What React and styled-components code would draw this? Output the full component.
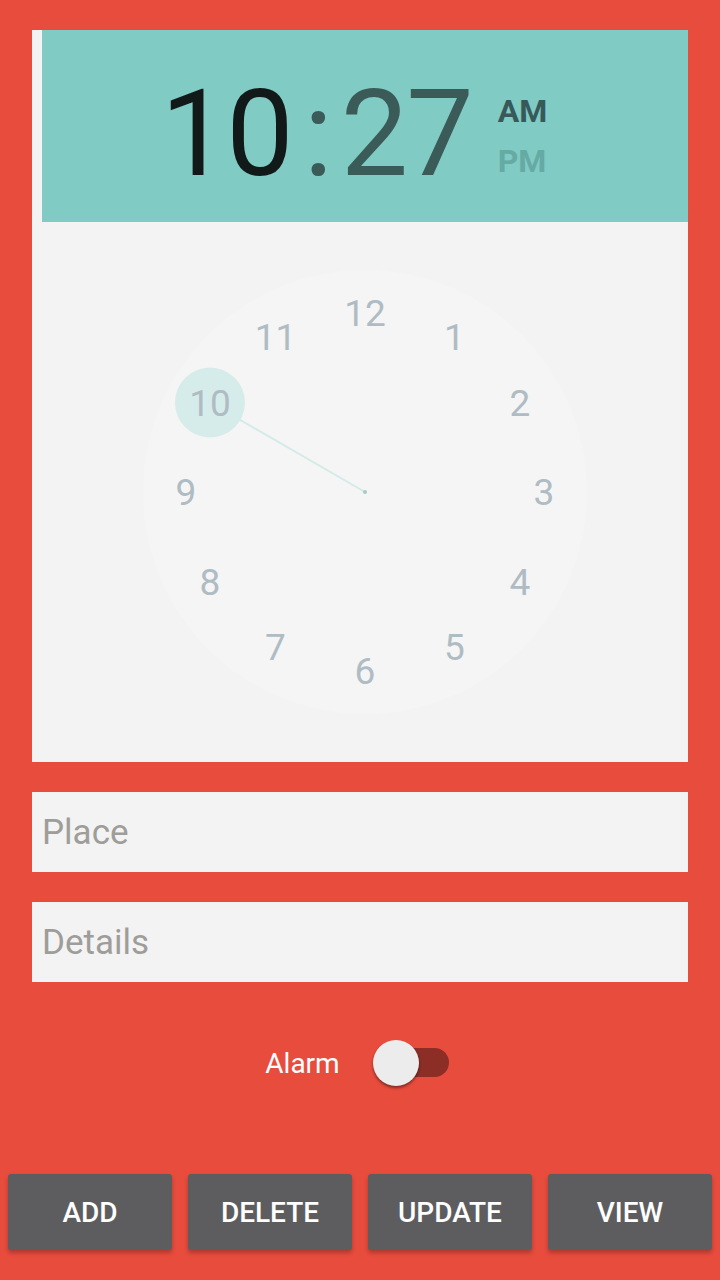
import React from 'react';
import styled, { createGlobalStyle } from 'styled-components';

const GlobalStyle = createGlobalStyle`
  body {
    margin: 0;
    background: #e84c3d;
    font-family: Roboto, "Liberation Sans", sans-serif;
  }
`;

const Page = styled.div`
  width: 720px;
  height: 1280px;
  display: flex;
  flex-direction: column;
  background: #e84c3d;
`;
const Card = styled.div`
  margin: 30px 32px 0;
  height: 732px;
  background: #f3f3f3;
  display: flex;
  flex-direction: column;
`;
const Header = styled.div`
  margin-left: 10px;
  height: 192px;
  box-sizing: border-box;
  padding: 16px 22px 0 0;
  background: #80cbc4;
  display: flex;
  align-items: center;
  justify-content: center;
`;
const Digits = styled.span`
  font-size: 120px;
  line-height: 1;
  letter-spacing: -2px;
  color: ${(p) => (p.active ? '#121a19' : '#3b5b59')};
`;
const Colon = styled.span`
  font-size: 120px;
  line-height: 1;
  color: #3b5b59;
  margin: 0 8px 0 12px;
`;
const Meridiem = styled.div`
  display: flex;
  flex-direction: column;
  gap: 18px;
  margin-left: 26px;
  margin-top: 4px;
`;
const MeridiemLabel = styled.span`
  font-size: 32px;
  font-weight: 700;
  line-height: 32px;
  color: ${(p) => (p.active ? '#37595a' : '#66aaa4')};
`;
const DialArea = styled.div`
  flex: 1;
  margin-left: 10px;
  display: flex;
  align-items: center;
  justify-content: center;
`;
const Dial = styled.div`
  position: relative;
  width: 444px;
  height: 444px;
  border-radius: 50%;
  background: #f5f5f5;
`;
const HandLayer = styled.svg`
  position: absolute;
  inset: 0;
`;
const Numeral = styled.span`
  position: absolute;
  transform: translate(-50%, -50%);
  font-size: 37px;
  line-height: 1;
  color: #afbcc3;
`;
const Field = styled.div`
  margin: 30px 32px 0;
  height: 80px;
  background: #f3f3f3;
  display: flex;
  align-items: center;
  padding-left: 10px;
  font-size: 35px;
  color: #9e9d99;
`;
const AlarmRow = styled.div`
  margin-top: 57px;
  height: 48px;
  display: flex;
  align-items: center;
  justify-content: center;
  gap: 33px;
  padding-right: 6px;
`;
const AlarmLabel = styled.span`
  font-size: 28px;
  color: #ffffff;
`;
const Switch = styled.div`
  position: relative;
  width: 76px;
  height: 46px;
`;
const SwitchTrack = styled.div`
  position: absolute;
  right: 0;
  top: 8px;
  width: 60px;
  height: 29px;
  border-radius: 15px;
  background: #8c2e25;
`;
const SwitchThumb = styled.div`
  position: absolute;
  left: 0;
  top: 0;
  width: 46px;
  height: 46px;
  border-radius: 50%;
  background: #ececec;
  box-shadow: 0 2px 3px rgba(0, 0, 0, 0.45);
`;
const ButtonRow = styled.div`
  margin-top: auto;
  margin-bottom: 30px;
  padding: 0 8px;
  display: grid;
  grid-template-columns: repeat(4, 1fr);
  gap: 16px;
`;
const Button = styled.button`
  height: 76px;
  border: none;
  border-radius: 3px;
  background: #5d5d5f;
  color: #ffffff;
  font-family: Roboto, "Liberation Sans", sans-serif;
  font-size: 28px;
  font-weight: 500;
  box-shadow: 0 3px 4px rgba(0, 0, 0, 0.25);
`;

const RADIUS = 179;
const CENTER = 222;
const hours = [12, 1, 2, 3, 4, 5, 6, 7, 8, 9, 10, 11];

const pos = (i) => {
  const a = (i * Math.PI) / 6;
  return { x: CENTER + RADIUS * Math.sin(a), y: CENTER - RADIUS * Math.cos(a) };
};

const App = () => {
  const sel = pos(10);
  return (
    <>
      <GlobalStyle />
      <Page>
        <Card>
          <Header>
            <Digits active>10</Digits>
            <Colon>:</Colon>
            <Digits>27</Digits>
            <Meridiem>
              <MeridiemLabel active>AM</MeridiemLabel>
              <MeridiemLabel>PM</MeridiemLabel>
            </Meridiem>
          </Header>
          <DialArea>
            <Dial>
              <HandLayer width="444" height="444" viewBox="0 0 444 444">
                <line x1={CENTER} y1={CENTER} x2={sel.x} y2={sel.y} stroke="#d3ebe8" strokeWidth="2" />
                <circle cx={sel.x} cy={sel.y} r="35" fill="#d6ecea" />
                <circle cx={CENTER} cy={CENTER} r="2" fill="#a9c9c5" />
              </HandLayer>
              {hours.map((h, i) => {
                const p = pos(i);
                return (
                  <Numeral key={h} style={{ left: p.x, top: p.y }}>
                    {h}
                  </Numeral>
                );
              })}
            </Dial>
          </DialArea>
        </Card>
        <Field>Place</Field>
        <Field>Details</Field>
        <AlarmRow>
          <AlarmLabel>Alarm</AlarmLabel>
          <Switch>
            <SwitchTrack />
            <SwitchThumb />
          </Switch>
        </AlarmRow>
        <ButtonRow>
          <Button>ADD</Button>
          <Button>DELETE</Button>
          <Button>UPDATE</Button>
          <Button>VIEW</Button>
        </ButtonRow>
      </Page>
    </>
  );
};

export default App;
